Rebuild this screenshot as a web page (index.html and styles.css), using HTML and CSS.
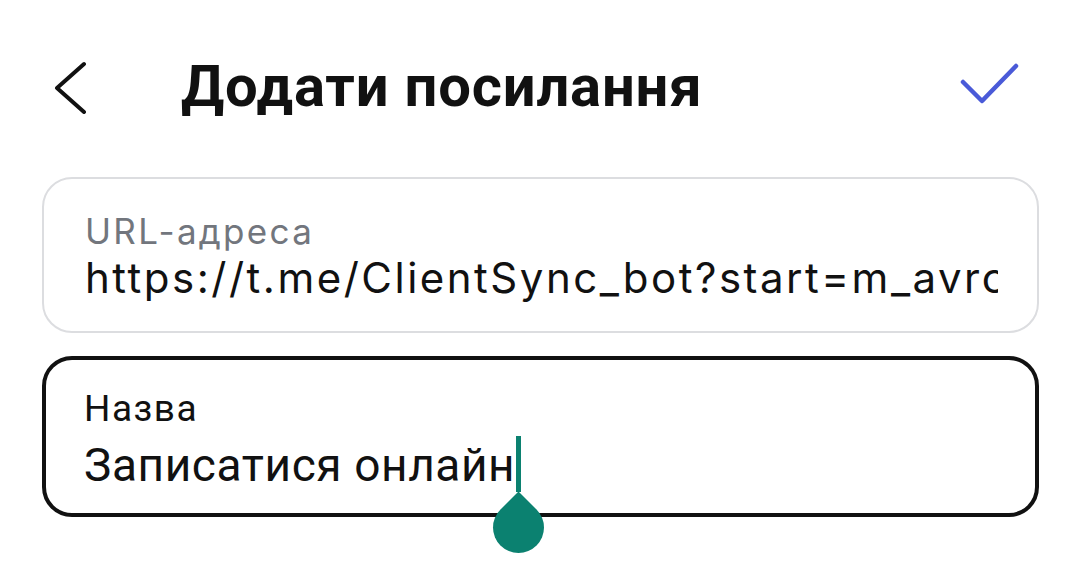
FILE: index.html
```html
<!DOCTYPE html>
<html lang="uk">
<head>
<meta charset="utf-8">
<title>Додати посилання</title>
<link rel="stylesheet" href="styles.css">
</head>
<body>
<div class="screen">
  <header class="topbar">
    <svg class="back" width="36" height="56" viewBox="0 0 36 56" aria-hidden="true">
      <path d="M32 6 L5 30 L32 54" fill="none" stroke="#111" stroke-width="4" stroke-linecap="round" stroke-linejoin="round"/>
    </svg>
    <h1 class="title">Додати посилання</h1>
    <svg class="done" width="60" height="56" viewBox="0 0 60 56" aria-hidden="true">
      <path d="M3 24 L22 43 L56 8" fill="none" stroke="#4a5ad8" stroke-width="4.5" stroke-linecap="round" stroke-linejoin="round"/>
    </svg>
  </header>

  <div class="field field-url">
    <div class="label">URL-адреса</div>
    <div class="value">https://t.me/ClientSync_bot?start=m_avrcodeonline</div>
  </div>

  <div class="field field-name">
    <div class="label">Назва</div>
    <div class="value">Записатися онлайн<span class="caret"><span class="handle"></span></span></div>
  </div>
</div>
</body>
</html>
```
FILE: styles.css
```css
html, body {
  margin: 0;
  padding: 0;
  background: #ffffff;
}

.screen {
  width: 1080px;
  height: 583px;
  overflow: hidden;
  display: flex;
  flex-direction: column;
  color: #111;
}

.topbar {
  display: flex;
  align-items: center;
  height: 56px;
  padding-top: 58px;
  padding-left: 52px;
  padding-right: 60px;
}

.back {
  flex: none;
  display: block;
}

.title {
  margin: 0 0 0 93px;
  font-family: Roboto, "Noto Sans", sans-serif;
  font-weight: 700;
  font-size: 58px;
  line-height: 56px;
  letter-spacing: 0.8px;
  color: #111;
}

.done {
  flex: none;
  display: block;
  margin-left: auto;
}

.field {
  box-sizing: border-box;
  margin-left: 42px;
  width: 997px;
  border-radius: 30px;
  background: #fff;
  display: flex;
  flex-direction: column;
}

.field-url {
  margin-top: 63px;
  border: 2px solid #dcdde0;
  padding: 32px 39px 28px 41px;
  font-family: Inter, "Noto Sans", sans-serif;
}

.field-url .label {
  font-size: 35px;
  line-height: 40px;
  letter-spacing: 2.3px;
  color: #72767d;
}

.field-url .value {
  margin-top: 2px;
  font-size: 42px;
  line-height: 50px;
  letter-spacing: 2.5px;
  color: #111;
  white-space: nowrap;
  overflow: hidden;
}

.field-name {
  margin-top: 23px;
  border: 4.5px solid #111;
  padding: 28px 38px 21px 38px;
  font-family: Roboto, "Noto Sans", sans-serif;
}

.field-name .label {
  font-size: 37px;
  line-height: 42px;
  letter-spacing: 1.5px;
  color: #111;
}

.field-name .value {
  margin-top: 6px;
  font-size: 46px;
  line-height: 52px;
  letter-spacing: 0.6px;
  color: #111;
  white-space: nowrap;
}

.caret {
  position: relative;
  display: inline-block;
  width: 5px;
  height: 56px;
  margin-left: 1px;
  background: #0b8170;
  vertical-align: -11px;
}

.handle {
  position: absolute;
  left: -23px;
  top: 66px;
  width: 51px;
  height: 51px;
  background: #0b8170;
  border-radius: 0 50% 50% 50%;
  transform: rotate(45deg);
  z-index: 2;
}
```
